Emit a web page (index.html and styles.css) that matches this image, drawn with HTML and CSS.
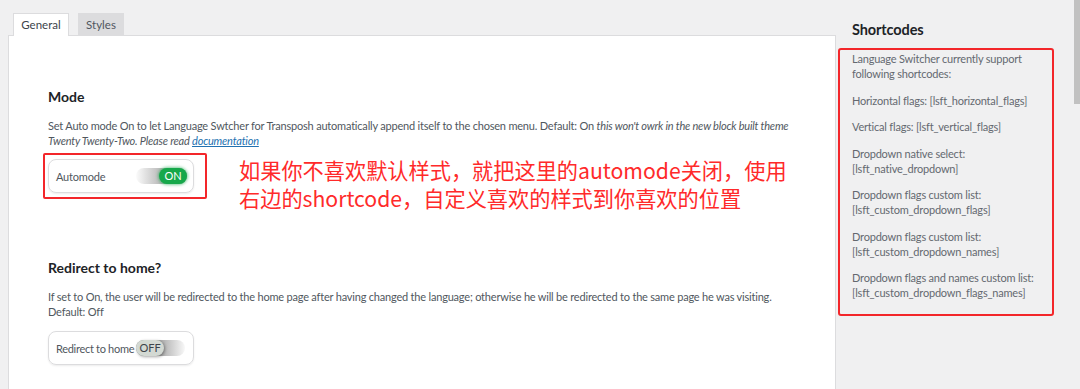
FILE: index.html
```html
<!DOCTYPE html>
<html lang="en">
<head>
<meta charset="utf-8">
<title>Language Switcher settings</title>
<link rel="stylesheet" href="styles.css">
</head>
<body>
<div class="page">
  <div class="main">
    <div class="tabs">
      <div class="tab tab-active">General</div>
      <div class="tab tab-styles">Styles</div>
    </div>
    <div class="panel">
      <section class="section section-mode">
        <h2 class="section-title">Mode</h2>
        <p class="desc">Set Auto mode On to let Language Swtcher for Transposh automatically append itself to the chosen menu. Default: On <em>this won't owrk in the new block built theme<br>Twenty Twenty-Two. Please read <a class="doc-link" href="#">documentation</a></em></p>
        <div class="annot-row">
          <div class="redbox">
            <div class="field">
              <span class="field-label">Automode</span>
              <span class="switch switch-on"><span class="knob knob-on">ON</span></span>
            </div>
          </div>
          <div class="annot-text">如果你不喜欢默认样式，就把这里的automode关闭，使用<br>右边的shortcode，自定义喜欢的样式到你喜欢的位置</div>
        </div>
      </section>
      <section class="section section-redirect">
        <h2 class="section-title">Redirect to home?</h2>
        <p class="desc">If set to On, the user will be redirected to the home page after having changed the language; otherwise he will be redirected to the same page he was visiting.<br>Default: Off</p>
        <div class="field field-plain">
          <span class="field-label">Redirect to home</span>
          <span class="switch switch-off"><span class="knob knob-off">OFF</span></span>
        </div>
      </section>
    </div>
  </div>
  <aside class="sidebar">
    <h3 class="side-title">Shortcodes</h3>
    <div class="side-box">
      <p>Language Switcher currently support<br>following shortcodes:</p>
      <p>Horizontal flags: [lsft_horizontal_flags]</p>
      <p>Vertical flags: [lsft_vertical_flags]</p>
      <p>Dropdown native select:<br>[lsft_native_dropdown]</p>
      <p>Dropdown flags custom list:<br>[lsft_custom_dropdown_flags]</p>
      <p>Dropdown flags custom list:<br>[lsft_custom_dropdown_names]</p>
      <p>Dropdown flags and names custom list:<br>[lsft_custom_dropdown_flags_names]</p>
    </div>
  </aside>
  <div class="scroll-thumb"></div>
</div>
</body>
</html>
```

FILE: styles.css
```css
html, body {
  margin: 0;
  padding: 0;
}
body {
  background: #f0f0f1;
  font-family: "Lato", "Liberation Sans", sans-serif;
  font-size: 11px;
  letter-spacing: -0.2px;
  color: #50575e;
  height: 389px;
  overflow: hidden;
}
.page {
  position: relative;
  display: flex;
  align-items: flex-start;
  height: 389px;
  overflow: hidden;
}
.main {
  margin-left: 8px;
  width: 828px;
  flex: none;
  display: flex;
  flex-direction: column;
}
.tabs {
  display: flex;
  gap: 9px;
  padding: 13px 0 0 5px;
  margin-bottom: -1px;
  position: relative;
  z-index: 1;
}
.tab {
  box-sizing: border-box;
  height: 22px;
  line-height: 21px;
  text-align: center;
  border: 1px solid #c3c4c7;
  border-bottom: 0;
  font-size: 11.5px;
  letter-spacing: 0;
  color: #3c434a;
}
.tab-active {
  width: 56px;
  height: 23px;
  background: #fff;
  border-color: #dcdcde;
}
.tab-styles {
  width: 46px;
  background: #dcdcde;
  border-color: #dcdcde;
  color: #50575e;
}
.panel {
  flex: none;
  box-sizing: border-box;
  background: #fff;
  border: 1px solid #dcdcde;
  padding: 0 30px 0 39px;
  height: 400px;
}
.section-title {
  margin: 0;
  font-size: 14px;
  line-height: 20px;
  font-weight: 700;
  letter-spacing: 0;
  color: #1d2327;
}
.section-mode {
  padding-top: 51px;
}
.section-redirect {
  padding-top: 46px;
}
.desc {
  margin: 11px 0 0;
  line-height: 15px;
  white-space: nowrap;
}
.desc em {
  font-style: italic;
}
.doc-link {
  color: #2271b1;
  text-decoration: underline;
}
.annot-row {
  display: flex;
  align-items: flex-start;
  gap: 32px;
  margin: 5px 0 0 -5px;
}
.redbox {
  border: 2px solid #f3262a;
  border-radius: 2px;
  padding: 4px 11px 4px 3px;
}
.annot-text {
  margin-top: 3px;
  font-family: "Noto Sans CJK SC", "Noto Sans", sans-serif;
  font-size: 21.2px;
  line-height: 28px;
  letter-spacing: 0;
  color: #ff2a2a;
  white-space: nowrap;
}
.field {
  box-sizing: border-box;
  width: 146px;
  height: 34px;
  border: 1px solid #dcdcde;
  border-radius: 8px;
  box-shadow: 0 1px 2px rgba(0, 0, 0, 0.08);
  display: flex;
  align-items: center;
  padding-left: 7px;
}
.field-plain {
  margin-top: 12px;
}
.field-label {
  width: 80px;
  flex: none;
  white-space: nowrap;
  color: #50575e;
}
.field-plain .field-label {
  letter-spacing: -0.3px;
}
.switch {
  width: 51px;
  height: 16px;
  border-radius: 8px;
  display: flex;
  align-items: center;
}
.switch-on {
  background: linear-gradient(to right, #fbfbfb 0%, #a9a9a9 60%);
  justify-content: flex-end;
}
.switch-off {
  width: 49px;
  background: linear-gradient(to right, #9c9c9c 40%, #f8f8f8 100%);
  justify-content: flex-start;
}
.knob {
  height: 16px;
  width: 28px;
  border-radius: 8px;
  font-size: 11px;
  line-height: 16px;
  letter-spacing: 0;
  text-align: center;
}
.knob-on {
  background: #16a84a;
  color: #fff;
  box-shadow: 0 0 3px 1px rgba(22, 168, 74, 0.55);
}
.knob-off {
  background: #d3d9d3;
  color: #3c434a;
  box-shadow: 1px 1px 3px rgba(0, 0, 0, 0.35);
}
.sidebar {
  flex: none;
  width: 244px;
  display: flex;
  flex-direction: column;
  align-items: flex-start;
}
.side-title {
  margin: 20px 0 0 16px;
  font-size: 14.5px;
  line-height: 20px;
  font-weight: 700;
  letter-spacing: -0.1px;
  color: #1d2327;
}
.side-box {
  box-sizing: border-box;
  margin: 8px 0 0 2px;
  width: 216px;
  border: 2px solid #f3262a;
  border-radius: 3px;
  padding: 1px 10px 14px 12px;
  color: #646970;
}
.side-box p {
  margin: 0 0 11.5px;
  line-height: 15px;
  white-space: nowrap;
}
.side-box p:last-child {
  margin-bottom: 0;
}
.scroll-thumb {
  position: absolute;
  top: 0;
  right: 0;
  width: 6px;
  height: 104px;
  background: #c1c1c1;
}
```
